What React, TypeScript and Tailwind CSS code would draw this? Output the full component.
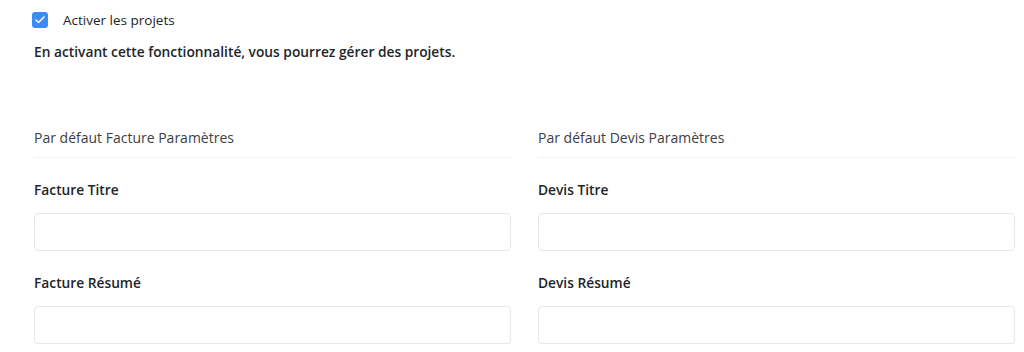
import { Check } from 'lucide-react';

function Field({ label }: { label: string }) {
  return (
    <div>
      <label className="block h-[18px] text-[13.75px] font-semibold leading-[18px] text-[#212529]">{label}</label>
      <input
        type="text"
        className="mt-[14px] block h-[38px] w-full rounded-[4px] border border-[#e3e6ea] bg-white px-3 text-[13px] outline-none"
      />
    </div>
  );
}

function Section({ title, prefix }: { title: string; prefix: string }) {
  return (
    <div>
      <div className="h-[18px] text-[14px] font-medium leading-[18px] text-[#3d4044]">{title}</div>
      <div className="mt-[10px] border-t border-[#f1f2f4]" />
      <div className="mt-[23px] flex flex-col gap-[23px]">
        <Field label={`${prefix} Titre`} />
        <Field label={`${prefix} Résumé`} />
      </div>
    </div>
  );
}

export default function App() {
  return (
    <div className="h-[352px] w-[1024px] overflow-hidden bg-white pt-[12px] font-['Open_Sans','Noto_Sans',sans-serif]">
      <div className="flex items-center pl-[32px]">
        <span className="flex h-4 w-4 items-center justify-center rounded-[3px] bg-[#3b8cf5]">
          <Check className="h-3 w-3 text-white" strokeWidth={3} />
        </span>
        <span className="ml-[15px] text-[13.5px] leading-4 text-[#212529]">Activer les projets</span>
      </div>
      <p className="mt-[15px] pl-[34px] text-[13.75px] font-semibold leading-[18px] text-[#212529]">
        En activant cette fonctionnalité, vous pourrez gérer des projets.
      </p>
      <div className="mt-[68px] grid grid-cols-2 gap-[27px] pl-[34px] pr-[9px]">
        <Section title="Par défaut Facture Paramètres" prefix="Facture" />
        <Section title="Par défaut Devis Paramètres" prefix="Devis" />
      </div>
    </div>
  );
}
